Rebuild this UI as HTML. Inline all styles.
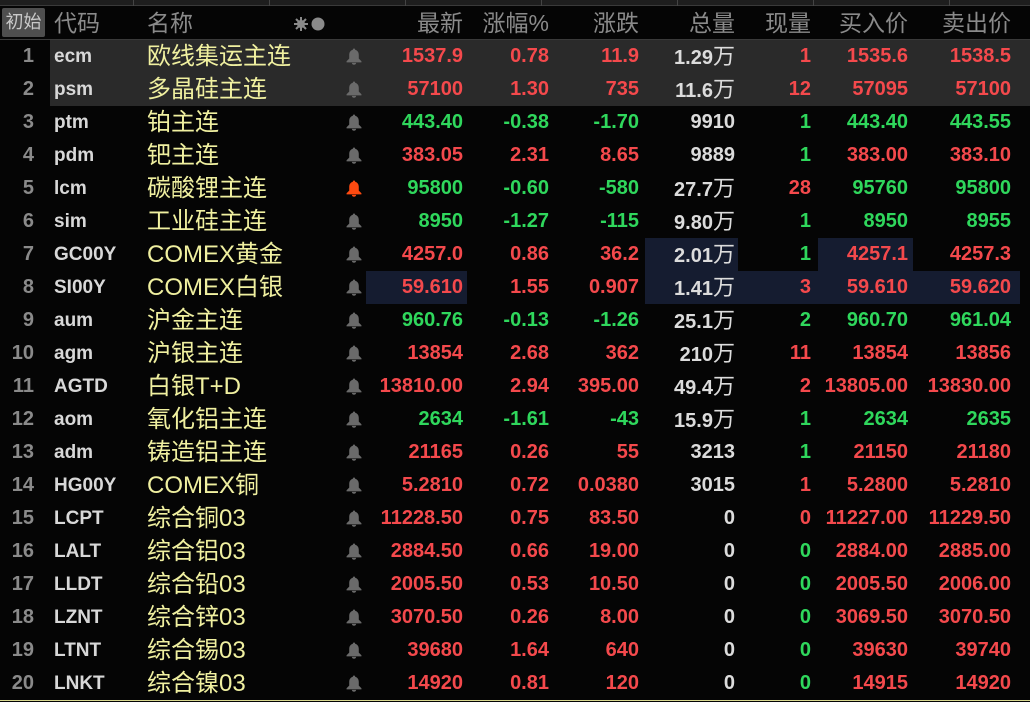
<!DOCTYPE html>
<html><head><meta charset="utf-8"><style>
*{margin:0;padding:0;box-sizing:border-box}
body{width:1030px;height:702px;background:#050505;overflow:hidden;position:relative;font-family:"Liberation Sans","Noto Sans CJK SC",sans-serif}
.top{position:absolute;left:0;top:0;width:1030px;height:6px;background:#1e1e1e;border-bottom:1px solid #3a3a3a}
.top i{position:absolute;top:0;width:1px;height:6px;background:#444}
.hdr{position:absolute;left:0;top:7px;width:1030px;height:33px;border-bottom:1px solid #3a3a3a}
.hdr span{position:absolute;top:3px;font-size:23px;color:#8a8a8a;line-height:26px}
.init{position:absolute;left:2px;top:8px;width:43px;height:29px;background:#4e4e4e;border-radius:2px;color:#c8c8c8;font-size:18px;line-height:29px;text-align:center}
.r{position:absolute;left:0;width:1030px;height:33px}
.r span{position:absolute;top:0;line-height:33px;white-space:nowrap}
.g{background:#2a2a2a;left:50px!important;width:980px!important}
.i{right:996px;color:#8a8a8a;font-size:20px;font-weight:bold}
.c{left:54px;color:#d8d8d8;font-size:19px;font-weight:bold}
.n{left:147px;color:#f0f0a0;font-size:24px}
.b{left:346px;top:8px!important;width:16px;height:17px}
.v{font-size:20px;font-weight:bold}
.a{right:567px}.p{right:481px}.d{right:391px}.t{right:295px;color:#dcdcdc}.x{right:219px}.y{right:122px}.z{right:19px}
.R{color:#f4494c}.G{color:#2fd75c}.W{color:#dcdcdc}
.t small{font-size:22px;font-weight:normal}
.hl{position:absolute;background:#151c30;height:33px}
</style></head><body>
<div class="top"><i style="left:133px"></i><i style="left:269px"></i><i style="left:405px"></i><i style="left:541px"></i><i style="left:677px"></i><i style="left:813px"></i><i style="left:949px"></i></div>
<div class="hdr">
<span style="left:54px">代码</span><span style="left:147px">名称</span>
<svg style="position:absolute;left:294px;top:9px" width="32" height="16"><g stroke="#8a8a8a" stroke-width="2"><line x1="7" y1="1" x2="7" y2="15"/><line x1="0" y1="8" x2="14" y2="8"/><line x1="2" y1="3" x2="12" y2="13"/><line x1="12" y1="3" x2="2" y2="13"/></g><circle cx="7" cy="8" r="4" fill="#8a8a8a"/><circle cx="24" cy="8" r="6.5" fill="#8a8a8a"/></svg>
<span style="right:567px">最新</span><span style="right:481px">涨幅%</span><span style="right:391px">涨跌</span><span style="right:295px">总量</span><span style="right:219px">现量</span><span style="right:122px">买入价</span><span style="right:19px">卖出价</span>
</div>
<div class="init">初始</div>
<div class="hl" style="left:645px;top:238px;width:93px"></div>
<div class="hl" style="left:818px;top:238px;width:95px"></div>
<div class="hl" style="left:366px;top:271px;width:101px"></div>
<div class="hl" style="left:645px;top:271px;width:375px"></div>
<svg width="0" height="0" style="position:absolute"><defs><symbol id="bl" viewBox="0 0 15 16"><path d="M7.5 0.5 C8.3 0.5 8.6 1 8.6 1.6 C11 2.3 12 4.2 12 6.5 L12 10 L14.5 12.5 L14.5 13.5 L0.5 13.5 L0.5 12.5 L3 10 L3 6.5 C3 4.2 4 2.3 6.4 1.6 C6.4 1 6.7 0.5 7.5 0.5 Z M5.5 14 L9.5 14 C9.5 15 8.6 15.8 7.5 15.8 C6.4 15.8 5.5 15 5.5 14 Z" fill="currentColor"/></symbol></defs></svg>

<div class="r" style="top:40px"><span class="g" style="height:33px"></span><span class="i">1</span><span class="c">ecm</span><span class="n">欧线集运主连</span><svg class="b" style="position:absolute;color:#6a6a6a"><use href="#bl"/></svg><span class="v a R">1537.9</span><span class="v p R">0.78</span><span class="v d R">11.9</span><span class="v t">1.29<small>万</small></span><span class="v x R">1</span><span class="v y R">1535.6</span><span class="v z R">1538.5</span></div>
<div class="r" style="top:73px"><span class="g" style="height:33px"></span><span class="i">2</span><span class="c">psm</span><span class="n">多晶硅主连</span><svg class="b" style="position:absolute;color:#6a6a6a"><use href="#bl"/></svg><span class="v a R">57100</span><span class="v p R">1.30</span><span class="v d R">735</span><span class="v t">11.6<small>万</small></span><span class="v x R">12</span><span class="v y R">57095</span><span class="v z R">57100</span></div>
<div class="r" style="top:106px"><span class="i">3</span><span class="c">ptm</span><span class="n">铂主连</span><svg class="b" style="position:absolute;color:#6a6a6a"><use href="#bl"/></svg><span class="v a G">443.40</span><span class="v p G">-0.38</span><span class="v d G">-1.70</span><span class="v t">9910</span><span class="v x G">1</span><span class="v y G">443.40</span><span class="v z G">443.55</span></div>
<div class="r" style="top:139px"><span class="i">4</span><span class="c">pdm</span><span class="n">钯主连</span><svg class="b" style="position:absolute;color:#6a6a6a"><use href="#bl"/></svg><span class="v a R">383.05</span><span class="v p R">2.31</span><span class="v d R">8.65</span><span class="v t">9889</span><span class="v x G">1</span><span class="v y R">383.00</span><span class="v z R">383.10</span></div>
<div class="r" style="top:172px"><span class="i">5</span><span class="c">lcm</span><span class="n">碳酸锂主连</span><svg class="b" style="position:absolute;color:#ff4a10"><use href="#bl"/></svg><span class="v a G">95800</span><span class="v p G">-0.60</span><span class="v d G">-580</span><span class="v t">27.7<small>万</small></span><span class="v x R">28</span><span class="v y G">95760</span><span class="v z G">95800</span></div>
<div class="r" style="top:205px"><span class="i">6</span><span class="c">sim</span><span class="n">工业硅主连</span><svg class="b" style="position:absolute;color:#6a6a6a"><use href="#bl"/></svg><span class="v a G">8950</span><span class="v p G">-1.27</span><span class="v d G">-115</span><span class="v t">9.80<small>万</small></span><span class="v x G">1</span><span class="v y G">8950</span><span class="v z G">8955</span></div>
<div class="r" style="top:238px"><span class="i">7</span><span class="c">GC00Y</span><span class="n">COMEX黄金</span><svg class="b" style="position:absolute;color:#6a6a6a"><use href="#bl"/></svg><span class="v a R">4257.0</span><span class="v p R">0.86</span><span class="v d R">36.2</span><span class="v t">2.01<small>万</small></span><span class="v x G">1</span><span class="v y R">4257.1</span><span class="v z R">4257.3</span></div>
<div class="r" style="top:271px"><span class="i">8</span><span class="c">SI00Y</span><span class="n">COMEX白银</span><svg class="b" style="position:absolute;color:#6a6a6a"><use href="#bl"/></svg><span class="v a R">59.610</span><span class="v p R">1.55</span><span class="v d R">0.907</span><span class="v t">1.41<small>万</small></span><span class="v x R">3</span><span class="v y R">59.610</span><span class="v z R">59.620</span></div>
<div class="r" style="top:304px"><span class="i">9</span><span class="c">aum</span><span class="n">沪金主连</span><svg class="b" style="position:absolute;color:#6a6a6a"><use href="#bl"/></svg><span class="v a G">960.76</span><span class="v p G">-0.13</span><span class="v d G">-1.26</span><span class="v t">25.1<small>万</small></span><span class="v x G">2</span><span class="v y G">960.70</span><span class="v z G">961.04</span></div>
<div class="r" style="top:337px"><span class="i">10</span><span class="c">agm</span><span class="n">沪银主连</span><svg class="b" style="position:absolute;color:#6a6a6a"><use href="#bl"/></svg><span class="v a R">13854</span><span class="v p R">2.68</span><span class="v d R">362</span><span class="v t">210<small>万</small></span><span class="v x R">11</span><span class="v y R">13854</span><span class="v z R">13856</span></div>
<div class="r" style="top:370px"><span class="i">11</span><span class="c">AGTD</span><span class="n">白银T+D</span><svg class="b" style="position:absolute;color:#6a6a6a"><use href="#bl"/></svg><span class="v a R">13810.00</span><span class="v p R">2.94</span><span class="v d R">395.00</span><span class="v t">49.4<small>万</small></span><span class="v x R">2</span><span class="v y R">13805.00</span><span class="v z R">13830.00</span></div>
<div class="r" style="top:403px"><span class="i">12</span><span class="c">aom</span><span class="n">氧化铝主连</span><svg class="b" style="position:absolute;color:#6a6a6a"><use href="#bl"/></svg><span class="v a G">2634</span><span class="v p G">-1.61</span><span class="v d G">-43</span><span class="v t">15.9<small>万</small></span><span class="v x G">1</span><span class="v y G">2634</span><span class="v z G">2635</span></div>
<div class="r" style="top:436px"><span class="i">13</span><span class="c">adm</span><span class="n">铸造铝主连</span><svg class="b" style="position:absolute;color:#6a6a6a"><use href="#bl"/></svg><span class="v a R">21165</span><span class="v p R">0.26</span><span class="v d R">55</span><span class="v t">3213</span><span class="v x G">1</span><span class="v y R">21150</span><span class="v z R">21180</span></div>
<div class="r" style="top:469px"><span class="i">14</span><span class="c">HG00Y</span><span class="n">COMEX铜</span><svg class="b" style="position:absolute;color:#6a6a6a"><use href="#bl"/></svg><span class="v a R">5.2810</span><span class="v p R">0.72</span><span class="v d R">0.0380</span><span class="v t">3015</span><span class="v x R">1</span><span class="v y R">5.2800</span><span class="v z R">5.2810</span></div>
<div class="r" style="top:502px"><span class="i">15</span><span class="c">LCPT</span><span class="n">综合铜03</span><svg class="b" style="position:absolute;color:#6a6a6a"><use href="#bl"/></svg><span class="v a R">11228.50</span><span class="v p R">0.75</span><span class="v d R">83.50</span><span class="v t">0</span><span class="v x R">0</span><span class="v y R">11227.00</span><span class="v z R">11229.50</span></div>
<div class="r" style="top:535px"><span class="i">16</span><span class="c">LALT</span><span class="n">综合铝03</span><svg class="b" style="position:absolute;color:#6a6a6a"><use href="#bl"/></svg><span class="v a R">2884.50</span><span class="v p R">0.66</span><span class="v d R">19.00</span><span class="v t">0</span><span class="v x G">0</span><span class="v y R">2884.00</span><span class="v z R">2885.00</span></div>
<div class="r" style="top:568px"><span class="i">17</span><span class="c">LLDT</span><span class="n">综合铅03</span><svg class="b" style="position:absolute;color:#6a6a6a"><use href="#bl"/></svg><span class="v a R">2005.50</span><span class="v p R">0.53</span><span class="v d R">10.50</span><span class="v t">0</span><span class="v x G">0</span><span class="v y R">2005.50</span><span class="v z R">2006.00</span></div>
<div class="r" style="top:601px"><span class="i">18</span><span class="c">LZNT</span><span class="n">综合锌03</span><svg class="b" style="position:absolute;color:#6a6a6a"><use href="#bl"/></svg><span class="v a R">3070.50</span><span class="v p R">0.26</span><span class="v d R">8.00</span><span class="v t">0</span><span class="v x G">0</span><span class="v y R">3069.50</span><span class="v z R">3070.50</span></div>
<div class="r" style="top:634px"><span class="i">19</span><span class="c">LTNT</span><span class="n">综合锡03</span><svg class="b" style="position:absolute;color:#6a6a6a"><use href="#bl"/></svg><span class="v a R">39680</span><span class="v p R">1.64</span><span class="v d R">640</span><span class="v t">0</span><span class="v x G">0</span><span class="v y R">39630</span><span class="v z R">39740</span></div>
<div class="r" style="top:667px"><span class="i">20</span><span class="c">LNKT</span><span class="n">综合镍03</span><svg class="b" style="position:absolute;color:#6a6a6a"><use href="#bl"/></svg><span class="v a R">14920</span><span class="v p R">0.81</span><span class="v d R">120</span><span class="v t">0</span><span class="v x G">0</span><span class="v y R">14915</span><span class="v z R">14920</span></div>
<div style="position:absolute;left:0;top:700px;width:1030px;height:1px;background:#d8d890"></div>
</body></html>
